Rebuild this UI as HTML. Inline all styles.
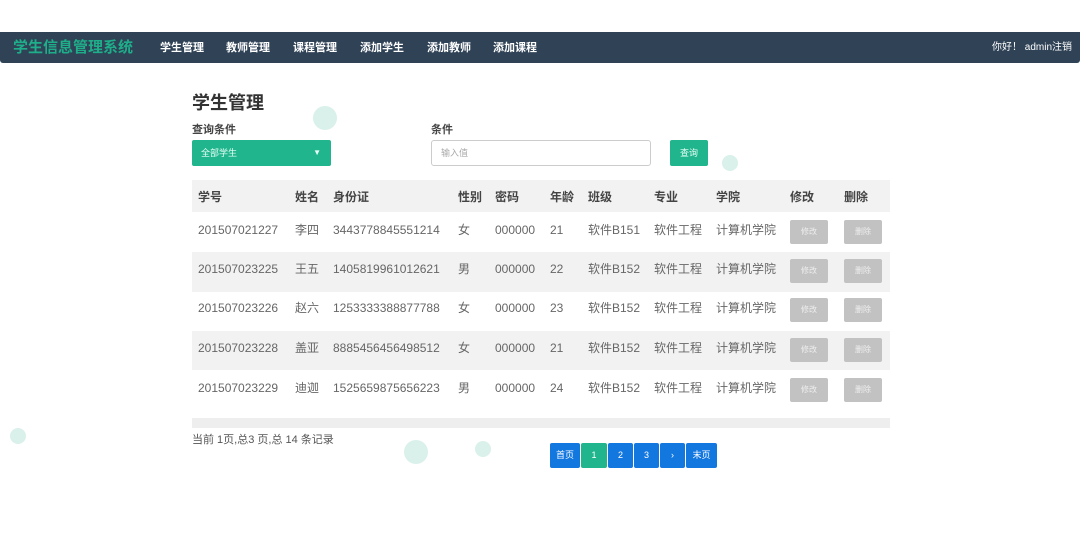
<!DOCTYPE html>
<html><head><meta charset="utf-8"><style>
*{margin:0;padding:0;box-sizing:border-box}
body{width:1080px;height:540px;background:#fff;position:relative;overflow:hidden;font-family:"Liberation Sans","Noto Sans CJK SC",sans-serif;color:#555}
.abs{position:absolute}
.nav{left:0;top:32px;width:1080px;height:31px;background:#2f4256;border-radius:0 0 3px 3px}
.nav .brand{left:13px;top:7px;font-size:15px;line-height:16px;font-weight:bold;color:#1fae8a;white-space:nowrap}
.nav .item{top:9px;font-size:11px;line-height:12px;font-weight:bold;color:#fff;white-space:nowrap}
.t{font-size:12px;line-height:14px;color:#666;white-space:nowrap}
.h{font-size:12px;line-height:14px;font-weight:bold;color:#444;white-space:nowrap}
.btn{width:38px;height:24px;background:#c2c2c2;border-radius:2px;color:#eee;font-size:8px;text-align:center;line-height:24px}
.pg{top:443px;height:25px;background:#1377e0;color:#fff;font-size:9px;text-align:center;line-height:25px;border-radius:2px}
.dot{border-radius:50%;background:#bfe8dc;opacity:.6}
</style></head><body>
<div class="abs nav">
<div class="abs brand" style="top:8px">学生信息管理系统</div>
<div class="abs item" style="left:160px;top:10px">学生管理</div>
<div class="abs item" style="left:226px;top:10px">教师管理</div>
<div class="abs item" style="left:293px;top:10px">课程管理</div>
<div class="abs item" style="left:360px;top:10px">添加学生</div>
<div class="abs item" style="left:427px;top:10px">添加教师</div>
<div class="abs item" style="left:493px;top:10px">添加课程</div>
<div class="abs item" style="left:992px;font-weight:normal;font-size:10px;top:10px">你好！ admin注销</div>
</div>
<div class="abs dot" style="left:313px;top:106px;width:24px;height:24px"></div>
<div class="abs dot" style="left:404px;top:440px;width:24px;height:24px"></div>
<div class="abs dot" style="left:475px;top:441px;width:16px;height:16px"></div>
<div class="abs dot" style="left:722px;top:155px;width:16px;height:16px"></div>
<div class="abs dot" style="left:10px;top:428px;width:16px;height:16px"></div>
<div class="abs" style="left:192px;top:93px;font-size:18px;line-height:20px;font-weight:bold;color:#333">学生管理</div>
<div class="abs h" style="left:192px;top:123px;font-size:11px">查询条件</div>
<div class="abs h" style="left:431px;top:123px;font-size:11px">条件</div>
<div class="abs" style="left:192px;top:140px;width:139px;height:26px;background:#20b58c;border-radius:2px;color:#e8fff8;font-size:9px;line-height:26px;padding-left:9px">全部学生<span style="position:absolute;right:10px;font-size:8px">▼</span></div>
<div class="abs" style="left:431px;top:140px;width:220px;height:26px;border:1px solid #ccc;border-radius:3px;color:#aaa;font-size:9px;line-height:24px;padding-left:9px">输入值</div>
<div class="abs" style="left:670px;top:140px;width:38px;height:26px;background:#20b58c;border-radius:2px;color:#e8fff8;font-size:9px;line-height:26px;text-align:center">查询</div>
<div class="abs" style="left:192px;top:180px;width:698px;height:32px;background:#f2f2f2"></div>
<div class="abs" style="left:192px;top:252px;width:698px;height:40px;background:#f2f2f2"></div>
<div class="abs" style="left:192px;top:331px;width:698px;height:39px;background:#f2f2f2"></div>
<div class="abs" style="left:192px;top:418px;width:698px;height:10px;background:#eee"></div>
<div id="tbl"></div>
<div class="abs t" style="left:192px;top:433px;font-size:11px;color:#555">当前 1页,总3 页,总 14 条记录</div>
<div class="abs pg" style="left:550px;width:30px">首页</div>
<div class="abs pg" style="left:581px;width:26px;background:#20b58c">1</div>
<div class="abs pg" style="left:608px;width:25px">2</div>
<div class="abs pg" style="left:634px;width:25px">3</div>
<div class="abs pg" style="left:660px;width:25px">›</div>
<div class="abs pg" style="left:686px;width:31px">末页</div>
<script>
var cols=[198,295,333,458,495,550,588,654,716];
var hd=['学号','姓名','身份证','性别','密码','年龄','班级','专业','学院','修改','删除'];
var rows=[['201507021227','李四','3443778845551214','女','000000','21','软件B151','软件工程','计算机学院'],
['201507023225','王五','1405819961012621','男','000000','22','软件B152','软件工程','计算机学院'],
['201507023226','赵六','1253333388877788','女','000000','23','软件B152','软件工程','计算机学院'],
['201507023228','盖亚','8885456456498512','女','000000','21','软件B152','软件工程','计算机学院'],
['201507023229','迪迦','1525659875656223','男','000000','24','软件B152','软件工程','计算机学院']];
var tops=[223,262,301,341,381],h='';
var hx=cols.concat([790,844]);
hd.forEach(function(s,i){h+='<div class="abs h" style="left:'+hx[i]+'px;top:190px">'+s+'</div>'});
rows.forEach(function(r,j){r.forEach(function(s,i){h+='<div class="abs t" style="left:'+cols[i]+'px;top:'+tops[j]+'px">'+s+'</div>'});
h+='<div class="abs btn" style="left:790px;top:'+(tops[j]-3)+'px">修改</div><div class="abs btn" style="left:844px;top:'+(tops[j]-3)+'px">删除</div>'});
document.getElementById('tbl').innerHTML=h;
</script>
</body></html>
